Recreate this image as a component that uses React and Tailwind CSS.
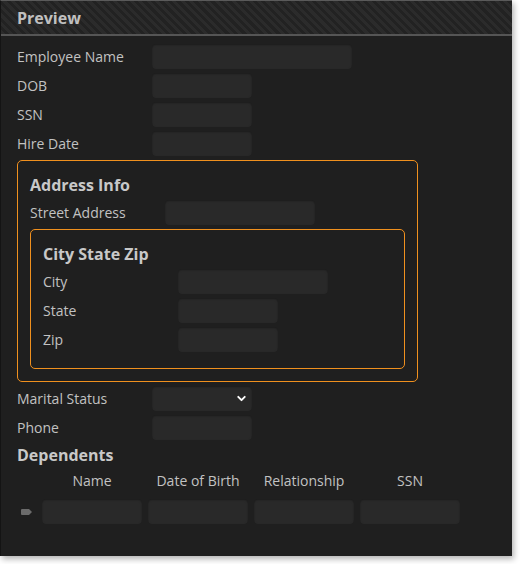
import { ChevronDown } from "lucide-react";

const inputCls =
  "h-[25px] rounded-[4px] bg-[#292929] shadow-[inset_0_1px_2px_rgba(0,0,0,0.35)]";

function Field({ label, width = "w-[100px]", select }) {
  return (
    <div className="flex h-[25px] items-center">
      <div className="w-[135px] shrink-0 text-[14px] text-[#c2c2c2]">{label}</div>
      <div className={`${inputCls} ${width} flex items-center justify-end pr-[4px]`}>
        {select && <ChevronDown size={13} strokeWidth={3.5} className="text-white" />}
      </div>
    </div>
  );
}

function Group({ title, children, inner }) {
  return (
    <div
      className={`flex flex-col gap-[4px] rounded-[5px] border border-[#f0901e] px-[12px] pt-[13px] ${
        inner ? "w-[375px] pb-[16px]" : "w-[401px] pb-[12px]"
      }`}
    >
      <div className="h-[22px] text-[16px] leading-[22px] font-bold text-[#c8c8c8]">{title}</div>
      {children}
    </div>
  );
}

export default function App() {
  const cols = ["Name", "Date of Birth", "Relationship", "SSN"];

  return (
    <div className="min-h-[564px] bg-white font-['Open_Sans',sans-serif]">
      <div className="w-[512px] h-[556px] bg-[#1f1f1f] border-t border-t-[#5a5a5a] border-l border-l-[#141414] shadow-[2px_3px_6px_rgba(0,0,0,0.3)]">
        <div className="h-[35px] border-b-2 border-b-[#555] bg-[repeating-linear-gradient(45deg,#2b2b2b_0px,#2b2b2b_3px,#222_3px,#222_6px)] px-[16px] flex items-center">
          <span className="text-[16px] font-bold text-[#c0c0c0]">Preview</span>
        </div>

        <div className="flex flex-col gap-[4px] px-[16px] pt-[8px]">
          <Field label="Employee Name" width="w-[200px]" />
          <Field label="DOB" />
          <Field label="SSN" />
          <Field label="Hire Date" />

          <Group title="Address Info">
            <Field label="Street Address" width="w-[150px]" />
            <Group title="City State Zip" inner>
              <Field label="City" width="w-[150px]" />
              <Field label="State" />
              <Field label="Zip" />
            </Group>
          </Group>

          <Field label="Marital Status" select />
          <Field label="Phone" />

          <div className="h-[22px] text-[16px] leading-[22px] font-bold text-[#c8c8c8]">
            Dependents
          </div>

          <div className="flex flex-col gap-[7px]">
            <div className="flex gap-[6px] pl-[25px]">
              {cols.map((c) => (
                <div key={c} className="w-[100px] text-center text-[14px] leading-[22px] text-[#c2c2c2]">
                  {c}
                </div>
              ))}
            </div>
            <div className="flex items-center gap-[6px]">
              <div className="w-[19px] flex justify-center">
                <svg width="11" height="6" viewBox="0 0 11 6">
                  <path d="M0 1 Q0 0 1 0 H8 L11 3 L8 6 H1 Q0 6 0 5 Z" fill="#6b6b6b" />
                </svg>
              </div>
              {cols.map((c) => (
                <div key={c} className={`${inputCls} w-[100px]`} />
              ))}
            </div>
          </div>
        </div>
      </div>
    </div>
  );
}
